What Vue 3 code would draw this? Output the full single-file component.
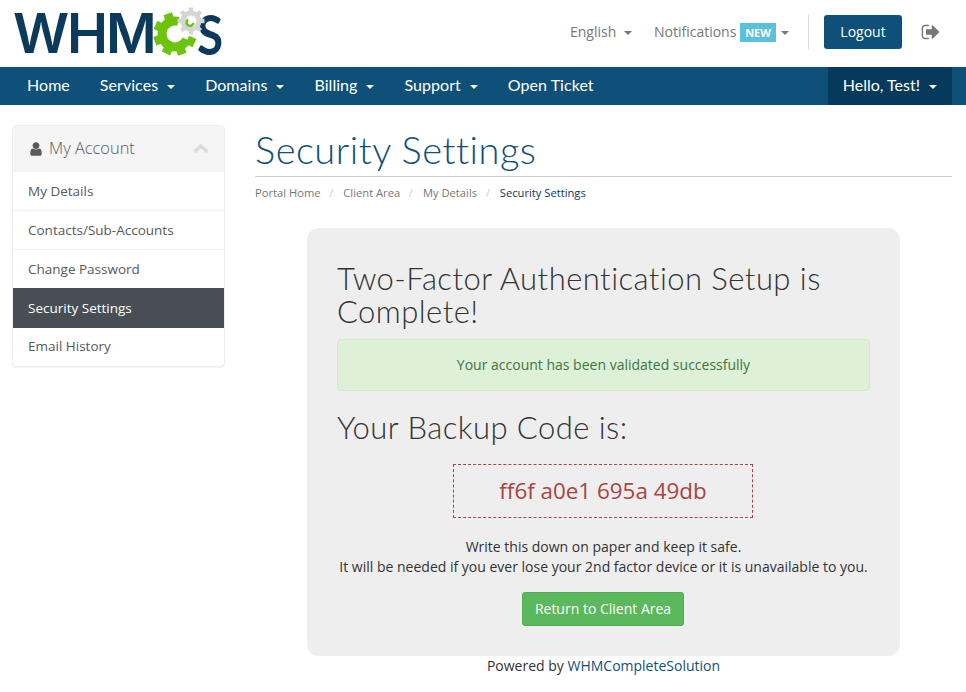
<template>
  <div class="page">
    <header class="top">
      <a class="logo">
        <span class="logo-text">WHM</span>
        <svg class="logo-gears" width="55" height="52" viewBox="0 0 55 52">
          <g fill="#6cc40f">
            <rect v-for="a in greenTeeth" :key="a" x="18.500" y="6.500" width="9" height="8" :transform="`rotate(${a} 23 28)`" />
            <path d="M26.400 15.400A13 13 0 1 0 34.800 33.500" fill="none" stroke="#6cc40f" stroke-width="9" />
          </g>
          <g fill="#d5d5d5">
            <rect v-for="a in grayTeeth" :key="a" x="36.800" y="1.500" width="4.400" height="5" :transform="`rotate(${a} 39 15)`" />
            <circle cx="39" cy="15" r="8" fill="#fff" stroke="#d5d5d5" stroke-width="5" />
          </g>
          <path d="M36 13.500A3.500 3.500 0 1 0 41.500 17" fill="none" stroke="#6cc40f" stroke-width="2.500" />
        </svg>
        <span class="logo-text logo-s">S</span>
      </a>
      <div class="top-right">
        <a class="top-link">English <i class="caret"></i></a>
        <a class="top-link notif">Notifications <span class="badge">NEW</span><i class="caret"></i></a>
        <div class="divider"></div>
        <a class="logout">Logout</a>
        <svg class="signout" width="20" height="20" viewBox="0 0 1792 1792">
          <path fill="#777" d="M704 1440q0 4 1 20t.5 26.500-3 23.500-10 19.500-20.500 6.500h-320q-119 0-203.500-84.500t-84.500-203.500v-704q0-119 84.500-203.500t203.500-84.500h320q13 0 22.500 9.500t9.500 22.500q0 4 1 20t.5 26.500-3 23.500-10 19.500-20.500 6.500h-320q-66 0-113 47t-47 113v704q0 66 47 113t113 47h312l11.500 1 11.500 3 8 5.500 7 9 2 13.500zm928-544q0 26-19 45l-544 544q-19 19-45 19t-45-19-19-45v-288h-448q-26 0-45-19t-19-45v-384q0-26 19-45t45-19h448v-288q0-26 19-45t45-19 45 19l544 544q19 19 19 45z" />
        </svg>
      </div>
    </header>

    <nav class="nav">
      <a v-for="item in navItems" :key="item.label" class="nav-link">
        {{ item.label }}<i v-if="item.caret" class="caret"></i>
      </a>
      <a class="nav-link hello">Hello, Test!<i class="caret"></i></a>
    </nav>

    <main class="main">
      <aside class="side">
        <div class="panel">
          <div class="panel-head">
            <svg class="user" width="16" height="16" viewBox="0 0 1792 1792">
              <path fill="#58595b" d="M1536 1399q0 109-62.500 187t-150.500 78h-854q-88 0-150.500-78t-62.500-187q0-85 8.500-160.500t31.500-152 58.500-131 94-89 134.500-34.500q131 128 313 128t313-128q76 0 134.500 34.500t94 89 58.500 131 31.500 152 8.500 160.500zm-256-887q0 159-112.500 271.500t-271.500 112.500-271.500-112.500-112.500-271.500 112.500-271.500 271.500-112.500 271.500 112.500 112.500 271.500z" />
            </svg>
            <span class="panel-title">My Account</span>
            <svg class="chev" width="16" height="10" viewBox="0 0 16 10">
              <path d="M1.500 8L8 2l6.500 6" fill="none" stroke="#dcdcdc" stroke-width="3.500" />
            </svg>
          </div>
          <a
            v-for="item in sideItems"
            :key="item"
            class="side-item"
            :class="{ active: item === 'Security Settings' }"
          >{{ item }}</a>
        </div>
      </aside>

      <section class="content">
        <h1>Security Settings</h1>
        <div class="crumbs">
          <a>Portal Home</a><span class="sep">/</span>
          <a>Client Area</a><span class="sep">/</span>
          <a>My Details</a><span class="sep">/</span>
          <span class="current">Security Settings</span>
        </div>

        <div class="card">
          <h2>Two-Factor Authentication Setup is Complete!</h2>
          <div class="alert">Your account has been validated successfully</div>
          <h2 class="code-title">Your Backup Code is:</h2>
          <div class="code">ff6f a0e1 695a 49db</div>
          <p class="note">
            Write this down on paper and keep it safe.<br />
            It will be needed if you ever lose your 2nd factor device or it is unavailable to you.
          </p>
          <a class="btn-return">Return to Client Area</a>
        </div>
        <div class="powered">Powered by <a>WHMCompleteSolution</a></div>
      </section>
    </main>
  </div>
</template>

<script setup>
const navItems = [
  { label: "Home" },
  { label: "Services", caret: true },
  { label: "Domains", caret: true },
  { label: "Billing", caret: true },
  { label: "Support", caret: true },
  { label: "Open Ticket" },
];

const sideItems = [
  "My Details",
  "Contacts/Sub-Accounts",
  "Change Password",
  "Security Settings",
  "Email History",
];

const greenTeeth = [115, 160, 205, 250, 295, 340];
const grayTeeth = [0, 45, 90, 135, 180, 225, 270, 315];
</script>

<style>
html,
body {
  margin: 0;
  background: #fff;
}
</style>

<style scoped>
.page {
  width: 966px;
  height: 692px;
  overflow: hidden;
  font-family: "Open Sans", sans-serif;
  font-size: 14px;
  color: #333;
}

.top {
  height: 67px;
  display: flex;
  align-items: center;
  justify-content: space-between;
  padding: 0 25px 0 13px;
}

.logo {
  display: flex;
  align-items: center;
  height: 67px;
}

.logo-text {
  font-family: Inter, sans-serif;
  font-weight: 600;
  font-size: 55px;
  line-height: 67px;
  color: #0c3a5b;
  letter-spacing: -2px;
}

.logo-gears {
  margin-left: -3px;
  margin-right: -10px;
  margin-top: -3px;
  position: relative;
  z-index: 1;
}

.logo-s {
  font-family: Lato, sans-serif;
  font-weight: 700;
  font-size: 56px;
  letter-spacing: 0;
  transform: scaleX(0.85);
  transform-origin: left center;
}

.top-right {
  display: flex;
  align-items: center;
  margin-top: -4px;
  color: #777;
}

.top-link {
  margin-right: 22px;
  color: #777;
}

.notif {
  margin-right: 19px;
}

.top-link .caret {
  margin-left: 4px;
  border-top-color: #777;
}

.notif .caret {
  margin-left: 5px;
}

.badge {
  display: inline-block;
  width: 36px;
  text-align: center;
  background: #5bc0de;
  color: #fff;
  font-size: 11px;
  font-weight: 700;
  line-height: 19px;
}

.divider {
  width: 1px;
  height: 34px;
  background: #ddd;
  margin-right: 15px;
}

.logout {
  width: 78px;
  text-align: center;
  background: #0f5078;
  color: #fff;
  border-radius: 3px;
  padding: 7px 0;
  line-height: 20px;
}

.signout {
  margin-left: 19px;
}

.caret {
  display: inline-block;
  width: 0;
  height: 0;
  margin-left: 9px;
  vertical-align: middle;
  border-top: 4px solid #fff;
  border-left: 4px solid transparent;
  border-right: 4px solid transparent;
}

.nav {
  height: 38px;
  background: #0f5078;
  display: flex;
  padding: 0 14px 0 12px;
}

.nav-link {
  font-family: Lato, sans-serif;
  font-size: 16px;
  letter-spacing: 0.050px;
  line-height: 35px;
  color: #fff;
  padding: 0 15px;
  white-space: nowrap;
}

.hello {
  margin-left: auto;
  letter-spacing: 0;
  background: #063a5c;
}

.main {
  display: flex;
  align-items: flex-start;
  padding: 20px 14px 0 12px;
}

.side {
  width: 213px;
  flex: none;
  margin-right: 30px;
}

.panel {
  background: #fff;
  border: 1px solid #eee;
  border-radius: 4px;
  box-shadow: 0 1px 1px rgba(0, 0, 0, 0.05);
  overflow: hidden;
}

.panel-head {
  height: 46px;
  background: #f5f5f5;
  display: flex;
  align-items: center;
  padding: 0 15px;
}

.panel-title {
  font-size: 16.400px;
  line-height: 22px;
  padding-bottom: 2px;
  font-weight: 300;
  color: #58595b;
  margin-left: 5px;
  flex: 1;
}

.side-item {
  display: block;
  height: 39px;
  line-height: 38px;
  padding: 0 15px;
  border-top: 1px solid #f2f2f2;
  box-sizing: border-box;
  font-size: 13.500px;
  color: #58595b;
}

.side-item:nth-child(2) {
  height: 38px;
  border-top: 0;
}

.side-item:last-child {
  height: 38px;
  border-top: 0;
  line-height: 37px;
}

.side-item.active {
  background: #484e53;
  color: #fff;
  border-top: 0;
  height: 40px;
  line-height: 40px;
}

.content {
  flex: 1;
  min-width: 0;
}

h1 {
  margin: 0;
  padding-bottom: 2px;
  font-family: Lato, sans-serif;
  font-weight: 300;
  font-size: 38px;
  letter-spacing: 0.500px;
  line-height: 49px;
  color: #0f5078;
  border-bottom: 1px solid #ccc;
}

.crumbs {
  margin-top: 8px;
  font-size: 11.200px;
  line-height: 15px;
  color: #777;
}

.sep {
  color: #ccc;
  padding: 0 10px 0 8.600px;
}

.current {
  color: #0c3a5b;
}

.card {
  width: 593px;
  box-sizing: border-box;
  height: 428px;
  margin: 28px 0 0 52px;
  padding: 34px 30px 0;
  background: #eee;
  border-radius: 12px;
}

h2 {
  margin: 0;
  font-family: Lato, sans-serif;
  font-weight: 300;
  font-size: 31px;
  letter-spacing: 0.450px;
  line-height: 33px;
  color: #333;
}

.alert {
  margin-top: 11px;
  height: 52px;
  box-sizing: border-box;
  line-height: 50px;
  background: #dff0d8;
  border: 1px solid #d6e9c6;
  border-radius: 4px;
  color: #3c763d;
  text-align: center;
}

.code-title {
  margin-top: 20px;
}

.code {
  width: 300px;
  height: 54px;
  box-sizing: border-box;
  margin: 20px 0 0 116px;
  border: 1px dashed #a94442;
  color: #a94442;
  font-size: 22.400px;
  line-height: 52px;
  text-align: center;
}

.note {
  margin: 19px 0 0;
  text-align: center;
  line-height: 20px;
}

.btn-return {
  display: block;
  width: 162px;
  box-sizing: border-box;
  margin: 15px 0 0 185px;
  background: #5cb85c;
  border: 1px solid #4cae4c;
  border-radius: 3px;
  color: #fff;
  text-align: center;
  line-height: 32px;
}

.powered {
  width: 593px;
  margin-left: 52px;
  text-align: center;
  line-height: 20px;
}

.powered a {
  color: #0f5078;
}
</style>
